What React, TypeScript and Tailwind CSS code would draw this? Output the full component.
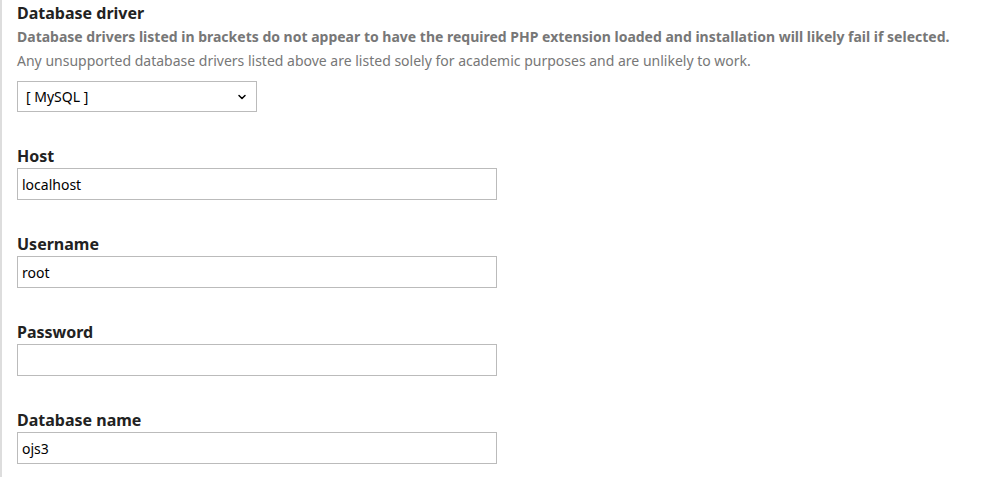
import { ChevronDown } from "lucide-react";

const fields = [
  { id: "host", label: "Host", value: "localhost" },
  { id: "username", label: "Username", value: "root" },
  { id: "password", label: "Password", value: "", type: "password" },
  { id: "dbname", label: "Database name", value: "ojs3" },
];

export default function App() {
  return (
    <div className="min-h-[477px] bg-white font-['Noto_Sans',sans-serif] text-[#222]">
      <div className="min-h-[477px] border-l-2 border-[#ddd] pl-[15px] pt-[1px]">
        <div>
          <h3 className="text-base font-bold leading-[24px]">Database driver</h3>
          <p className="text-sm font-bold leading-[24px] text-[#777]">
            Database drivers listed in brackets do not appear to have the required PHP
            extension loaded and installation will likely fail if selected.
          </p>
          <p className="text-sm leading-[24px] text-[#777]">
            Any unsupported database drivers listed above are listed solely for academic
            purposes and are unlikely to work.
          </p>
          <div className="relative mt-[8px] w-[240px]">
            <select
              defaultValue="mysqli"
              className="h-[31px] w-full appearance-none border border-[#bbb] bg-white pl-[8px] text-sm text-black outline-none"
            >
              <option value="mysqli">[ MySQL ]</option>
              <option value="postgres">[ PostgreSQL ]</option>
            </select>
            <ChevronDown
              className="pointer-events-none absolute right-[9px] top-[10px] h-[12px] w-[12px] text-black"
              strokeWidth={3}
            />
          </div>
        </div>

        <div className="mt-[33px] flex flex-col gap-[33px]">
          {fields.map((f) => (
            <div key={f.id}>
              <label htmlFor={f.id} className="block text-base font-bold leading-[23px]">
                {f.label}
              </label>
              <input
                id={f.id}
                type={f.type ?? "text"}
                defaultValue={f.value}
                className="block h-[32px] w-[480px] border border-[#bbb] bg-white px-[4px] text-sm text-black outline-none"
              />
            </div>
          ))}
        </div>
      </div>
    </div>
  );
}
